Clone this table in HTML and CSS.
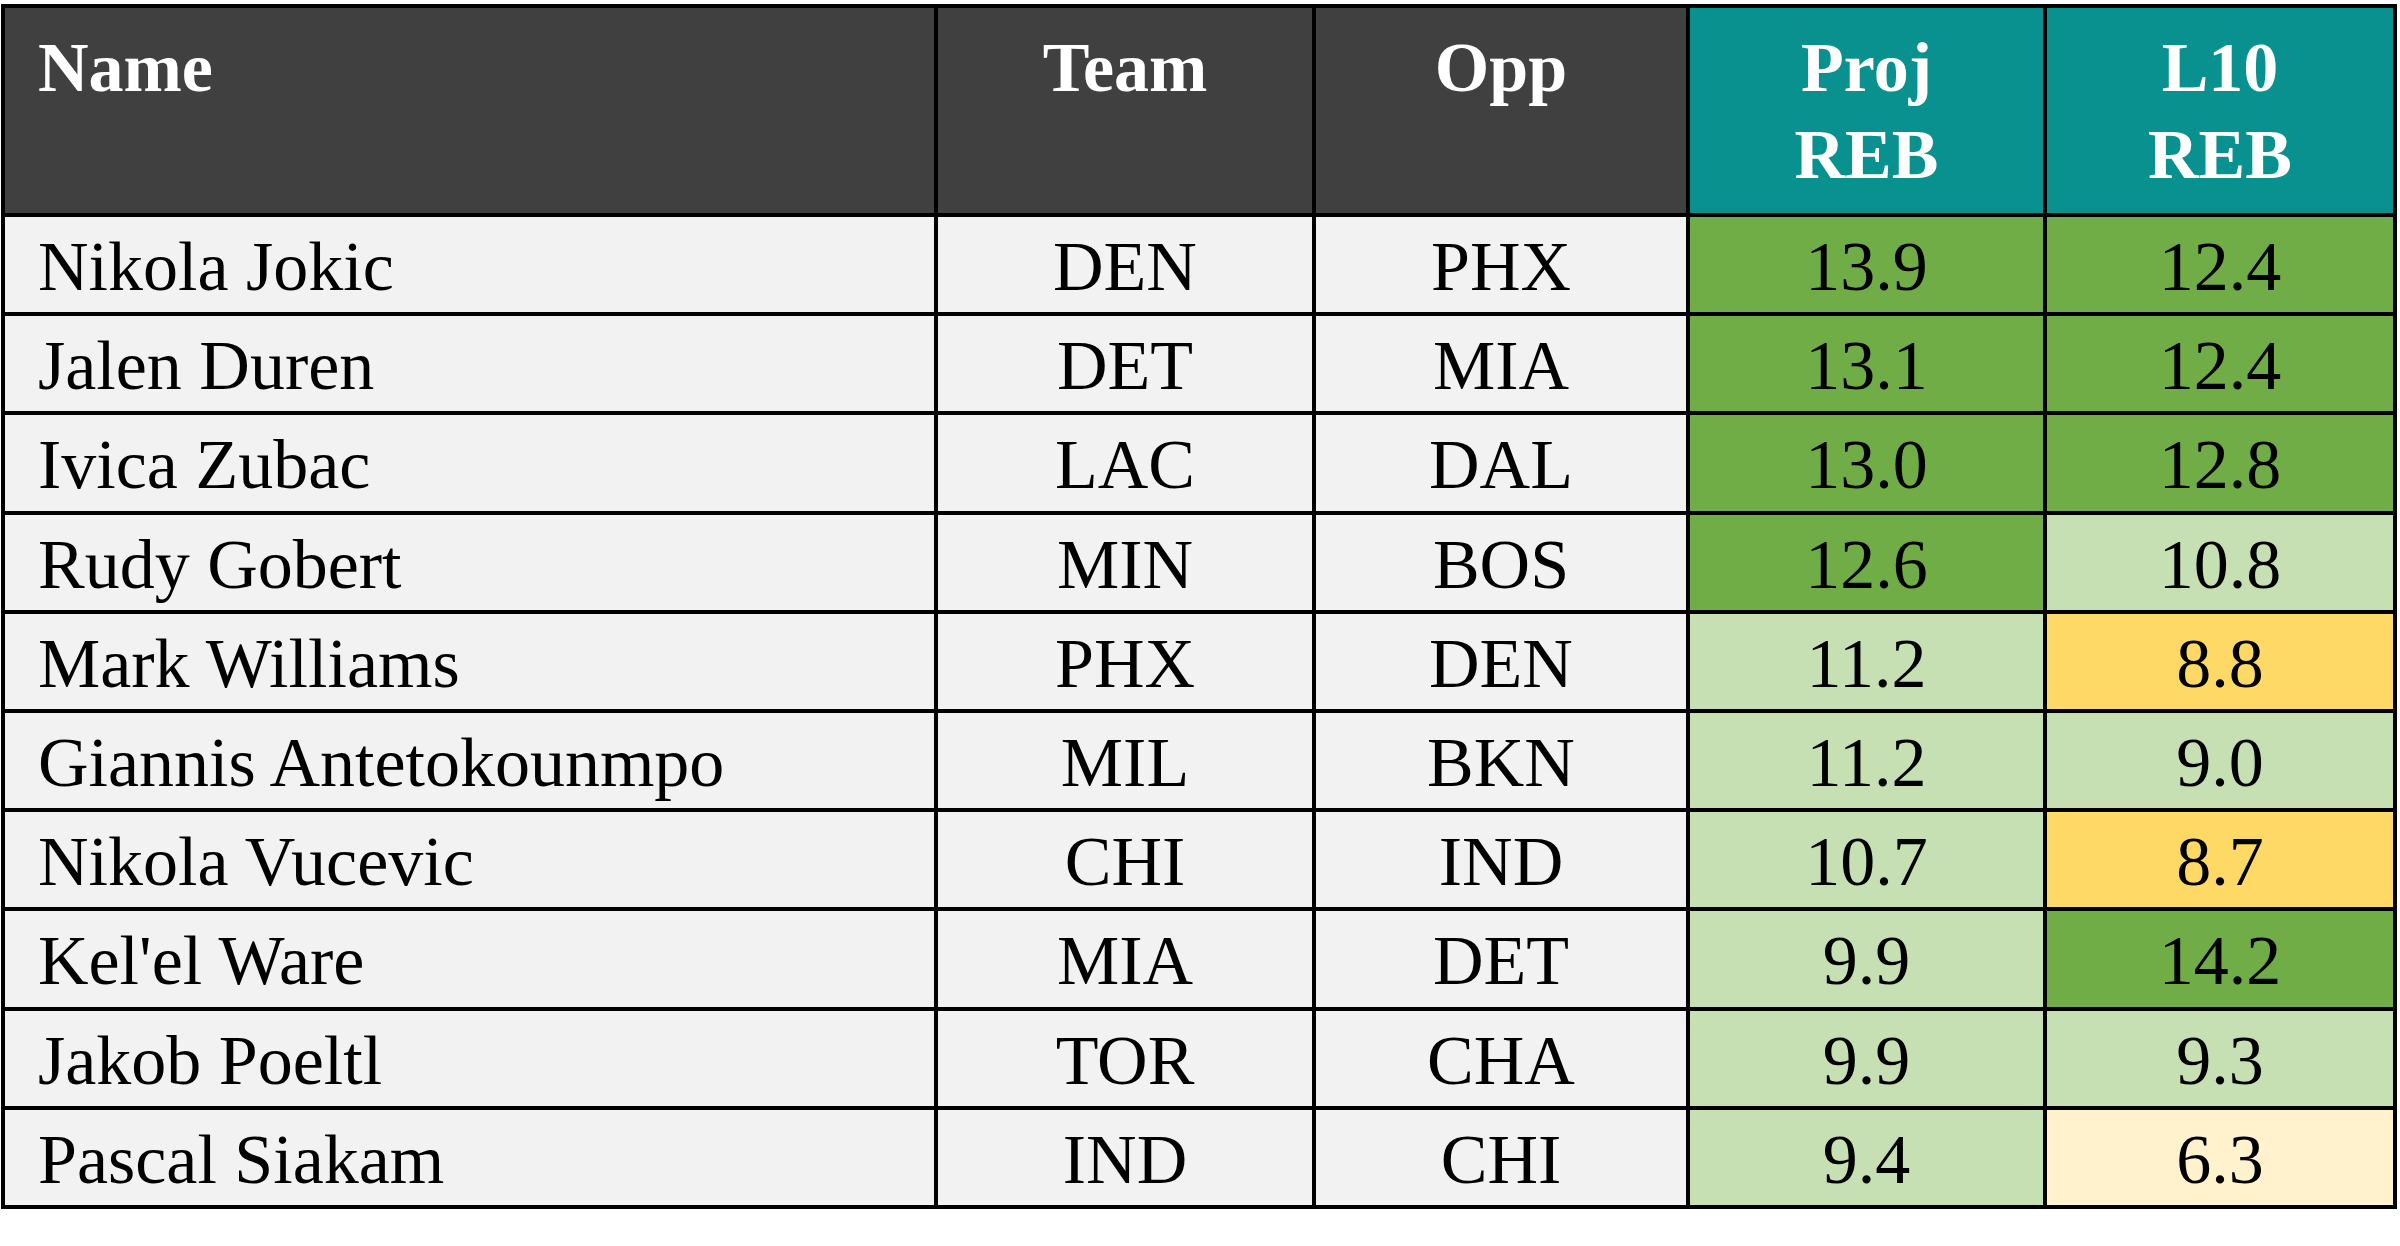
FILE: index.html
```html
<!DOCTYPE html>
<html lang="en">
<head>
<meta charset="utf-8">
<title>Rebounds</title>
<link rel="stylesheet" href="styles.css">
</head>
<body>
<div class="sheet">
  <div class="row head">
    <div class="cell name">Name</div>
    <div class="cell">Team</div>
    <div class="cell">Opp</div>
    <div class="cell teal">Proj<br>REB</div>
    <div class="cell teal">L10<br>REB</div>
  </div>
  <div class="row">
    <div class="cell name">Nikola Jokic</div><div class="cell">DEN</div><div class="cell">PHX</div>
    <div class="cell num dg">13.9</div><div class="cell num dg">12.4</div>
  </div>
  <div class="row">
    <div class="cell name">Jalen Duren</div><div class="cell">DET</div><div class="cell">MIA</div>
    <div class="cell num dg">13.1</div><div class="cell num dg">12.4</div>
  </div>
  <div class="row">
    <div class="cell name">Ivica Zubac</div><div class="cell">LAC</div><div class="cell">DAL</div>
    <div class="cell num dg">13.0</div><div class="cell num dg">12.8</div>
  </div>
  <div class="row">
    <div class="cell name">Rudy Gobert</div><div class="cell">MIN</div><div class="cell">BOS</div>
    <div class="cell num dg">12.6</div><div class="cell num lg">10.8</div>
  </div>
  <div class="row">
    <div class="cell name">Mark Williams</div><div class="cell">PHX</div><div class="cell">DEN</div>
    <div class="cell num lg">11.2</div><div class="cell num yl">8.8</div>
  </div>
  <div class="row">
    <div class="cell name">Giannis Antetokounmpo</div><div class="cell">MIL</div><div class="cell">BKN</div>
    <div class="cell num lg">11.2</div><div class="cell num lg">9.0</div>
  </div>
  <div class="row">
    <div class="cell name">Nikola Vucevic</div><div class="cell">CHI</div><div class="cell">IND</div>
    <div class="cell num lg">10.7</div><div class="cell num yl">8.7</div>
  </div>
  <div class="row">
    <div class="cell name">Kel'el Ware</div><div class="cell">MIA</div><div class="cell">DET</div>
    <div class="cell num lg">9.9</div><div class="cell num dg">14.2</div>
  </div>
  <div class="row">
    <div class="cell name">Jakob Poeltl</div><div class="cell">TOR</div><div class="cell">CHA</div>
    <div class="cell num lg">9.9</div><div class="cell num lg">9.3</div>
  </div>
  <div class="row">
    <div class="cell name">Pascal Siakam</div><div class="cell">IND</div><div class="cell">CHI</div>
    <div class="cell num lg">9.4</div><div class="cell num ly">6.3</div>
  </div>
</div>
</body>
</html>
```
FILE: styles.css
```css
html, body {
  margin: 0;
  padding: 0;
  background: #ffffff;
}

.sheet {
  margin: 4px 0 0 1px;
  width: 2388px;
  display: grid;
  grid-template-columns: 929px 374px 370px 353px 346px;
  grid-template-rows: 205px repeat(10, 95.2px);
  gap: 4px;
  padding: 4px;
  background: #000000;
  font-family: "Liberation Serif", "Times New Roman", serif;
  font-size: 70px;
  color: #000000;
}

.row {
  display: contents;
}

.cell {
  background: #f2f2f2;
  text-align: center;
  padding-top: 15px;
  line-height: 70px;
  white-space: nowrap;
  overflow: hidden;
}

.cell.name {
  text-align: left;
  padding-left: 33px;
}

.head .cell {
  background: #404040;
  color: #ffffff;
  font-weight: bold;
  line-height: 87px;
  padding-top: 16px;
}

.head .cell.teal {
  background: #099190;
}

.cell.dg { background: #70ad47; }
.cell.lg { background: #c6e0b4; }
.cell.yl { background: #ffd966; }
.cell.ly { background: #fff2cc; }
```
